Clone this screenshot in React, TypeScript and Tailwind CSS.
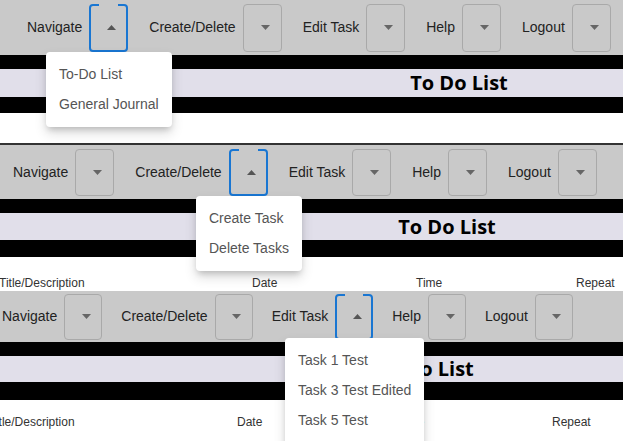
import React from "react";

const labels = ["Navigate", "Create/Delete", "Edit Task", "Help", "Logout"];

interface PanelCfg {
  nav: string;
  btn: string;
  gap: string;
  stripe1: string;
  band: string;
  heading: string;
  stripe2: string;
  white: string;
  columns?: { text: string; cls: string }[];
  colRow?: string;
}

interface MenuSpec {
  pos: string;
  items: string[];
}

function Caret({ up }: { up?: boolean }) {
  return (
    <svg width="9" height="5" viewBox="0 0 9 5" className="block">
      {up ? (
        <polygon points="0,5 9,5 4.5,0" fill="#555" />
      ) : (
        <polygon points="0,0 9,0 4.5,5" fill="#666" />
      )}
    </svg>
  );
}

function NavButton({ active, size }: { active: boolean; size: string }) {
  if (active) {
    return (
      <div
        className={`relative ml-[7px] flex items-center justify-center rounded-[4px] border-2 border-[#1976d2] pl-[6px] ${size}`}
      >
        {/* notch in the top edge */}
        <span className="absolute -top-[2px] left-[8px] right-[8px] h-[2px] bg-[#c9c9c9]" />
        <Caret up />
      </div>
    );
  }
  return (
    <div
      className={`ml-[7px] flex items-center justify-center rounded-[4px] border border-[#a9a9a9] pl-[6px] ${size}`}
    >
      <Caret />
    </div>
  );
}

function Menu({ spec }: { spec: MenuSpec }) {
  return (
    <div
      className={`absolute z-10 rounded-[4px] bg-white pt-[7px] pb-[8px] shadow-[0_4px_6px_-2px_rgba(0,0,0,0.2),0_6px_12px_1px_rgba(0,0,0,0.12)] ${spec.pos}`}
    >
      {spec.items.map((it) => (
        <div
          key={it}
          className="flex h-[30px] items-center whitespace-nowrap px-[13px] text-[14px] text-[#555]"
        >
          {it}
        </div>
      ))}
    </div>
  );
}

function Panel({
  cfg,
  active,
  menu,
}: {
  cfg: PanelCfg;
  active: number;
  menu: MenuSpec;
}) {
  return (
    <div className="relative overflow-hidden">
      <nav className={`flex items-center bg-[#c9c9c9] ${cfg.nav}`}>
        {labels.map((l, i) => (
          <div key={l} className={`flex shrink-0 items-center ${i > 0 ? cfg.gap : ""}`}>
            <span className="whitespace-nowrap text-[14px] text-[#222]">{l}</span>
            <NavButton active={i === active} size={cfg.btn} />
          </div>
        ))}
      </nav>
      <div className={`bg-black ${cfg.stripe1}`} />
      <div className={`flex items-center bg-[#e1dfea] ${cfg.band}`}>
        <div
          className={`shrink-0 text-center font-['Open_Sans',sans-serif] text-[20px] font-bold leading-none text-black ${cfg.heading}`}
        >
          To Do List
        </div>
      </div>
      <div className={`bg-black ${cfg.stripe2}`} />
      <div className={`bg-white ${cfg.white}`}>
        {cfg.columns && (
          <div className={`flex whitespace-nowrap text-[12px] leading-[14px] text-[#333] ${cfg.colRow}`}>
            {cfg.columns.map((c) => (
              <span key={c.text} className={`shrink-0 ${c.cls}`}>
                {c.text}
              </span>
            ))}
          </div>
        )}
      </div>
      <Menu spec={menu} />
    </div>
  );
}

const first: PanelCfg = {
  nav: "h-[55px] pl-[27px]",
  btn: "h-[48px] w-[39px]",
  gap: "ml-[21px]",
  stripe1: "h-[14px]",
  band: "h-[28px]",
  heading: "w-[918px]",
  stripe2: "h-[16px]",
  white: "h-[32px] border-b-2 border-[#333]",
};

const second: PanelCfg = {
  nav: "h-[54px] pl-[13px]",
  btn: "h-[47px] w-[39px]",
  gap: "ml-[21px]",
  stripe1: "h-[14px]",
  band: "h-[27px]",
  heading: "w-[894px]",
  stripe2: "h-[17px]",
  white: "h-[34px] pt-[19px]",
  colRow: "-ml-[1px]",
  columns: [
    { text: "Title/Description", cls: "w-[253px]" },
    { text: "Date", cls: "w-[164px]" },
    { text: "Time", cls: "w-[160px]" },
    { text: "Repeat", cls: "" },
  ],
};

const third: PanelCfg = {
  nav: "h-[51px] pl-[2px]",
  btn: "h-[46px] w-[38px]",
  gap: "ml-[19px]",
  stripe1: "h-[14px]",
  band: "h-[26px]",
  heading: "w-[850px]",
  stripe2: "h-[18px]",
  white: "h-[41px] pt-[15px]",
  colRow: "-ml-[11px]",
  columns: [
    { text: "Title/Description", cls: "w-[248px]" },
    { text: "Date", cls: "w-[161px]" },
    { text: "Time", cls: "w-[154px]" },
    { text: "Repeat", cls: "" },
  ],
};

export default function App() {
  return (
    <div className="h-[441px] w-[623px] overflow-hidden bg-white font-['Liberation_Sans',Arial,sans-serif]">
      <Panel
        cfg={first}
        active={0}
        menu={{ pos: "left-[46px] top-[52px]", items: ["To-Do List", "General Journal"] }}
      />
      <Panel
        cfg={second}
        active={1}
        menu={{ pos: "left-[196px] top-[51px]", items: ["Create Task", "Delete Tasks"] }}
      />
      <Panel
        cfg={third}
        active={2}
        menu={{
          pos: "left-[285px] top-[47px]",
          items: ["Task 1 Test", "Task 3 Test Edited", "Task 5 Test", ""],
        }}
      />
    </div>
  );
}
